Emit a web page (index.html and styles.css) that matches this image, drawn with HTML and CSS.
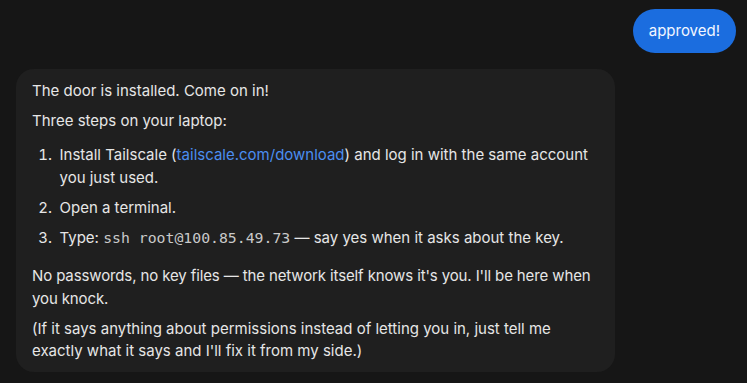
FILE: index.html
```html
<!DOCTYPE html>
<html>
<head>
<meta charset="utf-8">
<link rel="stylesheet" href="styles.css">
</head>
<body>
<div class="chat">
  <div class="row-user">
    <div class="bubble-user">approved!</div>
  </div>
  <div class="bubble-bot">
    <p>The door is installed. Come on in!</p>
    <p>Three steps on your laptop:</p>
    <ol class="steps">
      <li>Install Tailscale (<a class="link" href="#">tailscale.com/download</a>) and log in with the same account<br>you just used.</li>
      <li>Open a terminal.</li>
      <li>Type: <code class="code">ssh root@100.85.49.73</code> — say yes when it asks about the key.</li>
    </ol>
    <p class="tight">No passwords, no key files — the network itself knows it's you. I'll be here when<br>you knock.</p>
    <p>(If it says anything about permissions instead of letting you in, just tell me<br>exactly what it says and I'll fix it from my side.)</p>
  </div>
</div>
</body>
</html>
```

FILE: styles.css
```css
html, body {
  margin: 0;
  padding: 0;
  background: #161616;
}
body {
  font-family: Inter, "Noto Sans", sans-serif;
  font-size: 15px;
  line-height: 22.5px;
  color: #e6e6e6;
}
.chat {
  display: flex;
  flex-direction: column;
  padding: 9px 11px 0 16px;
  gap: 16px;
}
.row-user {
  display: flex;
  justify-content: flex-end;
}
.bubble-user {
  background: #1b6ddf;
  color: #f2f6ff;
  border-radius: 22px;
  padding: 10px 16px;
  line-height: 24px;
}
.bubble-bot {
  width: 599px;
  box-sizing: border-box;
  background: #1f1f1f;
  border-radius: 18px;
  padding: 11px 6px 9px 16px;
}
.bubble-bot p {
  margin: 0 0 7.5px;
}
.bubble-bot p:last-child {
  margin-bottom: 0;
}
.bubble-bot .tight {
  letter-spacing: -0.12px;
}
.steps {
  margin: 11.5px 0 16px;
  padding-left: 27.5px;
}
.steps li {
  margin-bottom: 7.5px;
}
.steps li::marker {
  content: counter(list-item) ".\2002";
}
.steps li:last-child {
  margin-bottom: 0;
}
.link {
  color: #4b8ef0;
  text-decoration: none;
}
.code {
  font-family: "DejaVu Sans Mono", monospace;
  font-size: 14.8px;
  color: #c9c9c9;
}
```
